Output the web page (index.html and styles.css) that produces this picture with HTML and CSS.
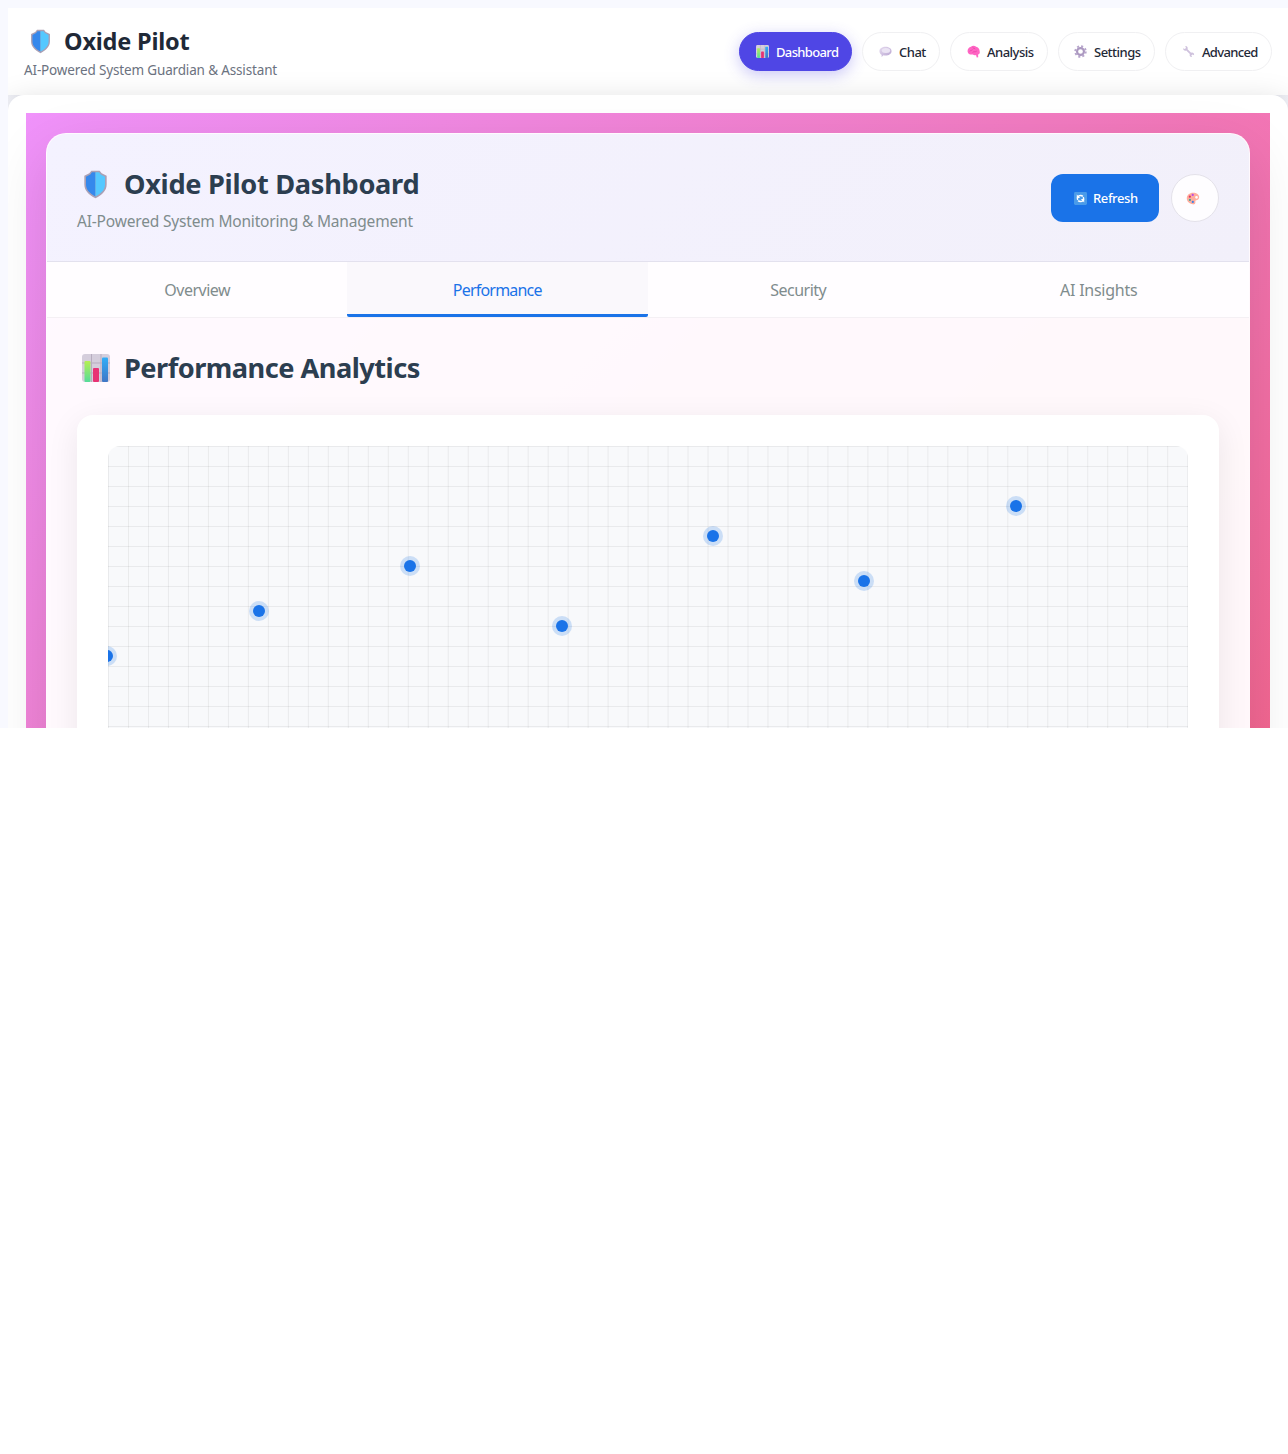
FILE: index.html
```html
<!DOCTYPE html>
<html lang="en">
<head>
<meta charset="utf-8">
<title>Oxide Pilot</title>
<link rel="stylesheet" href="styles.css">
</head>
<body>
<svg class="defs" aria-hidden="true">
  <defs>
    <linearGradient id="green" x2="0" y2="1"><stop stop-color="#b5ef52"/><stop offset="1" stop-color="#55dc9a"/></linearGradient>
    <linearGradient id="blue" x2="0" y2="1"><stop stop-color="#31aef8"/><stop offset="1" stop-color="#4076c5"/></linearGradient>
    <linearGradient id="lilac" x2="1" y2="1"><stop stop-color="#e6dcf0"/><stop offset="1" stop-color="#b7a3d0"/></linearGradient>
    <symbol id="shield" viewBox="0 0 24 28">
      <path d="M8 .7h8l2 2.500 4.800 2.300v8.300c0 6.200-4.200 10.200-10.800 13.500C5.400 24 1.200 20 1.200 13.800V5.500L6 3.200z" fill="#aaa0b5"/>
      <path d="M12 2.200H8.500L7 4.400 2.800 6.500v7.300c0 5.200 3.400 8.700 9.200 11.700z" fill="#3588ec"/>
      <path d="M12 2.200h3.500L17 4.400l4.200 2.100v7.300c0 5.200-3.400 8.700-9.200 11.700z" fill="#55c8ff"/>
    </symbol>
    <symbol id="chart" viewBox="0 0 28 28">
      <rect width="28" height="28" rx="3" fill="#d5cedc"/>
      <path d="M0 9h28M0 19h28M9.500 0v28M19 0v28" stroke="#b7adbf" fill="none"/>
      <rect x="2.500" y="7" width="6" height="21" rx="1" fill="url(#green)"/>
      <rect x="11" y="14" width="6" height="14" rx="1" fill="#e83274"/>
      <rect x="20" y="3.500" width="6" height="24.500" rx="1" fill="url(#blue)"/>
    </symbol>
    <symbol id="bubble" viewBox="0 0 14 14">
      <path d="M7 2c3.600 0 6.500 1.900 6.500 4.600S10.600 11.300 7 11.300c-.8 0-1.500-.1-2.200-.2L2.800 13v-2.600C1.300 9.600.5 8.200.5 6.600.5 3.900 3.400 2 7 2z" fill="url(#lilac)"/>
      <ellipse cx="7.500" cy="6" rx="4.500" ry="2.700" fill="#ebe4f4"/>
    </symbol>
    <symbol id="brain" viewBox="0 0 14 14">
      <path d="M.7 7.200C.2 4.700 2 2.300 4.200 1.800 6 .5 8.500.8 9.800 1.800c2.200.4 3.900 2.500 3.800 4.800.6 1.600-.2 3.200-1.700 3.600l.2 3-1.600.2-.8-2.600c-1.600.7-2.700 0-3.300-.6-2.400.6-5.500-.5-5.700-3z" fill="#ff65c3"/>
      <path d="M3 7c1-2 2-.5 3-2M6 2.500c1 1.500 2 .5 3 2M6 8c1.500-1.500 3 0 4.500-1.500" stroke="#e3379f" fill="none" stroke-width=".7"/>
    </symbol>
    <symbol id="gear" viewBox="0 0 14 14">
      <circle cx="7" cy="7" r="5.700" fill="none" stroke="#b7a5cc" stroke-width="2" stroke-dasharray="2.238 2.238"/>
      <circle cx="7" cy="7" r="3.700" fill="none" stroke="#ab98c0" stroke-width="2.300"/>
    </symbol>
    <symbol id="wrench" viewBox="0 0 14 14">
      <path d="M3.500 1.200C5.500 1 6.700 2.700 6 4.600l3.800 3.800c1.900-.7 3.600.5 3.200 2.600l-1.700-.9-1.300 1.200.9 1.700C9 13.300 7.700 11.800 8.400 9.800L4.600 6C2.700 6.700 1 5.400 1.300 3.500l1.700.9 1.300-1.300z" fill="#cfc2dd"/>
    </symbol>
    <symbol id="refresh" viewBox="0 0 14 14">
      <rect width="14" height="14" rx="1.500" fill="#4a9be9"/>
      <path d="M4 8.500C2.900 5.700 4.700 3.700 7 3.700c1 0 1.800.3 2.500 1M10 5.500c1.100 2.800-.7 4.800-3 4.800-1 0-1.800-.3-2.500-1" fill="none" stroke="#fff" stroke-width="1.600"/>
      <path d="M3 2.800v3.600h3.600zM11 11.200V7.600H7.400z" fill="#fff"/>
    </symbol>
    <symbol id="palette" viewBox="0 0 14 14">
      <path fill-rule="evenodd" d="M7 .7c4 0 6.700 2 6.700 4.800 0 2-1.500 3.200-3.200 3.500-1.300.2-.8 1.200-1 2.600-.2 1.500-1.300 1.900-2.700 1.700C3 12.800.3 10.300.3 6.800.3 3.200 3.200.7 7 .7zm3.800 3.500a1.500 1.500 0 1 0 0 3 1.500 1.500 0 0 0 0-3z" fill="#ffad9e"/>
      <circle cx="6.700" cy="3.100" r="1.200" fill="#b74be8"/><circle cx="3.600" cy="5" r="1.200" fill="#e23860"/><circle cx="3.700" cy="8.500" r="1.200" fill="#45a896"/><circle cx="6.800" cy="10.700" r="1.200" fill="#3c82e5"/>
    </symbol>
  </defs>
</svg>
<div class="app">
  <div class="frame">
    <header class="topbar">
      <div>
        <h1 class="brand"><svg class="brand-icon"><use href="#shield"/></svg><span>Oxide Pilot</span></h1>
        <p class="tagline">AI-Powered System Guardian &amp; Assistant</p>
      </div>
      <nav class="nav">
        <a class="pill pill-dashboard active"><svg><use href="#chart"/></svg><span>Dashboard</span></a>
        <a class="pill pill-chat"><svg><use href="#bubble"/></svg><span>Chat</span></a>
        <a class="pill pill-analysis"><svg><use href="#brain"/></svg><span>Analysis</span></a>
        <a class="pill pill-settings"><svg><use href="#gear"/></svg><span>Settings</span></a>
        <a class="pill pill-advanced"><svg><use href="#wrench"/></svg><span>Advanced</span></a>
      </nav>
    </header>
    <main class="content">
      <div class="backdrop">
        <section class="dashboard">
          <header class="dash-header">
            <div>
              <h2 class="title"><svg class="title-shield"><use href="#shield"/></svg><span>Oxide Pilot Dashboard</span></h2>
              <p class="subtitle">AI-Powered System Monitoring &amp; Management</p>
            </div>
            <div class="actions">
              <button class="refresh"><svg><use href="#refresh"/></svg><span>Refresh</span></button>
              <button class="theme" aria-label="Theme"><svg><use href="#palette"/></svg></button>
            </div>
          </header>
          <div class="tabs">
            <a class="tab">Overview</a>
            <a class="tab selected">Performance</a>
            <a class="tab tab-security">Security</a>
            <a class="tab tab-insights">AI Insights</a>
          </div>
          <div class="panel">
            <h2 class="title section-title"><svg class="title-chart"><use href="#chart"/></svg><span>Performance Analytics</span></h2>
            <div class="card">
              <div class="plot">
                <i class="point" style="left:-0.05%;top:210px"></i>
                <i class="point" style="left:14%;top:165px"></i>
                <i class="point" style="left:28%;top:120px"></i>
                <i class="point" style="left:42%;top:180px"></i>
                <i class="point" style="left:56%;top:90px"></i>
                <i class="point" style="left:70%;top:135px"></i>
                <i class="point" style="left:84.06%;top:60px"></i>
              </div>
            </div>
          </div>
        </section>
      </div>
    </main>
  </div>
</div>
</body>
</html>
```
FILE: styles.css
```css
* { box-sizing: border-box; }
html { background: #fff; }
body { margin: 0; font-family: "Noto Sans", sans-serif; color: #1f2937; }
h1, h2, p { margin: 0; }
.defs { position: absolute; width: 0; height: 0; }
svg { display: block; flex: none; }
span, p, .tab { white-space: nowrap; }
.app { height: 728px; padding: 8px 0 0 8px; background: #f8f9ff; }
.frame { height: 720px; overflow: hidden; display: flex; flex-direction: column; }
.topbar { flex: none; height: 87px; padding: 16px; background: #fff; box-shadow: 0 4px 20px rgba(0, 0, 0, .1); display: flex; justify-content: space-between; align-items: flex-start; }
.brand { height: 34px; display: flex; align-items: center; font-size: 23.5px; line-height: 34px; letter-spacing: -.2px; }
.brand-icon { width: 21px; height: 25px; margin: 0 13px 0 6px; }
.tagline { font-size: 13.5px; line-height: 21px; letter-spacing: -.15px; color: #6b7280; margin-top: 2px; }
.nav { display: flex; gap: 10px; padding-top: 8px; }
.pill { height: 39px; border: 1px solid #f0f0f2; border-radius: 20px; background: #fff; display: flex; align-items: center; padding-left: 16px; font-size: 13px; font-weight: 500; letter-spacing: -.5px; color: #1f2937; }
.pill svg { width: 13px; height: 13px; margin-right: 7px; }
.pill-dashboard { width: 113px; letter-spacing: -.65px; }
.pill-chat { width: 78px; }
.pill-analysis { width: 98px; }
.pill-settings { width: 97px; padding-left: 15px; }
.pill-advanced { width: 107px; letter-spacing: -.65px; }
.pill.active { background: #4f46e5; border-color: #4f46e5; color: #fff; box-shadow: 0 4px 15px rgba(79, 70, 229, .3); }
.content { flex: none; height: 1350px; padding: 18px; background: #fff; border-radius: 16px; box-shadow: 0 8px 32px rgba(0, 0, 0, .17); }
.backdrop { height: 1300px; padding: 20px; background: linear-gradient(135deg, #f093fb 0%, #f5576c 100%); }
.dashboard { height: 1260px; border-radius: 20px; border: 1px solid rgba(255, 255, 255, .2); background: rgba(255, 255, 255, .95); box-shadow: 0 20px 60px rgba(0, 0, 0, .12); overflow: hidden; }
.dash-header { height: 128px; padding: 29px 30px; border-bottom: 1px solid #e3e1ee; background: linear-gradient(135deg, #f4f2ff, #f2f0fa); display: flex; justify-content: space-between; }
.title { height: 42px; display: flex; align-items: center; font-size: 27.2px; line-height: 42px; letter-spacing: -.3px; color: #2c3e50; }
.title-shield { width: 25px; height: 29px; margin: 0 16px 0 6px; }
.title-chart { width: 28px; height: 28px; margin: 0 14px 0 5px; }
.subtitle { font-size: 15.5px; line-height: 24px; letter-spacing: -.18px; margin-top: 4px; color: #7f8c8d; }
.actions { display: flex; gap: 12px; padding-top: 11px; }
button { font: inherit; border: 0; }
.refresh { width: 108px; height: 48px; border-radius: 12px; background: #1a73e8; color: #fff; display: flex; align-items: center; padding: 0 0 0 23px; font-size: 13px; font-weight: 500; letter-spacing: -.4px; }
.refresh svg { width: 13px; height: 13px; margin-right: 6px; }
.theme { width: 48px; height: 48px; border-radius: 50%; border: 1px solid #e4e2ea; background: #fefdff; padding: 0 0 0 14px; display: flex; align-items: center; }
.theme svg { width: 14px; height: 13px; }
.tabs { height: 56px; display: grid; grid-template-columns: repeat(4, 1fr); background: #fffdff; border-bottom: 1px solid #f4f0f4; }
.tab { display: flex; align-items: center; justify-content: center; font-size: 16px; letter-spacing: -.5px; color: #7f8c8d; padding-top: 1px; }
.tab.selected { color: #1a73e8; background: #faf8fc; border-bottom: 3px solid #1a73e8; border-radius: 0 0 2px 2px; padding-top: 4px; letter-spacing: -.8px; margin-left: -1px; }
.tab-insights { letter-spacing: -.25px; }
.panel { padding: 29px 30px; }
.section-title { letter-spacing: -.52px; }
.card { margin-top: 26px; height: 850px; padding: 31px; border-radius: 16px; background: #fff; box-shadow: 0 8px 32px rgba(0, 0, 0, .08); }
.plot { position: relative; height: 300px; overflow: hidden; border-radius: 12px; background: linear-gradient(rgba(0, 0, 0, .06) 1px, transparent 1px) 0 0 / 20px 20px, linear-gradient(90deg, rgba(0, 0, 0, .06) 1px, transparent 1px) 0 0 / 19.989px 20px, #f8f9fb; }
.point { position: absolute; width: 12px; height: 12px; margin: -6px; border-radius: 50%; background: #1a73e8; box-shadow: 0 0 0 4px rgba(26, 115, 232, .2); }
```
